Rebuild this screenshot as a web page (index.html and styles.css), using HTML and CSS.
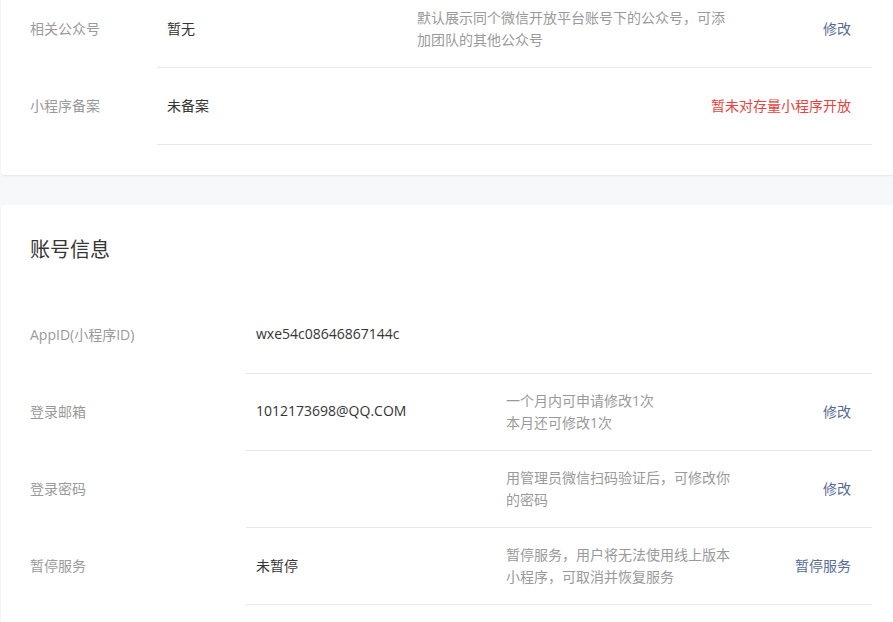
FILE: index.html
```html
<!DOCTYPE html>
<html lang="zh-CN">
<head>
<meta charset="utf-8">
<link rel="stylesheet" href="styles.css">
</head>
<body>
<div class="page">
  <section class="card card-top">
    <div class="row">
      <div class="label narrow">相关公众号</div>
      <div class="content">
        <div class="value">暂无</div>
        <div class="desc">默认展示同个微信开放平台账号下的公众号，可添加团队的其他公众号</div>
        <div class="action"><a class="link">修改</a></div>
      </div>
    </div>
    <div class="row">
      <div class="label narrow">小程序备案</div>
      <div class="content">
        <div class="value">未备案</div>
        <div class="desc"></div>
        <div class="action wide"><span class="warn">暂未对存量小程序开放</span></div>
      </div>
    </div>
  </section>

  <section class="card card-account">
    <h2 class="title">账号信息</h2>
    <div class="row">
      <div class="label">AppID(小程序ID)</div>
      <div class="content">
        <div class="value">wxe54c08646867144c</div>
        <div class="desc"></div>
        <div class="action"></div>
      </div>
    </div>
    <div class="row">
      <div class="label">登录邮箱</div>
      <div class="content">
        <div class="value">1012173698@QQ.COM</div>
        <div class="desc">一个月内可申请修改1次<br>本月还可修改1次</div>
        <div class="action"><a class="link">修改</a></div>
      </div>
    </div>
    <div class="row">
      <div class="label">登录密码</div>
      <div class="content">
        <div class="value"></div>
        <div class="desc">用管理员微信扫码验证后，可修改你的密码</div>
        <div class="action"><a class="link">修改</a></div>
      </div>
    </div>
    <div class="row">
      <div class="label">暂停服务</div>
      <div class="content">
        <div class="value">未暂停</div>
        <div class="desc">暂停服务，用户将无法使用线上版本小程序，可取消并恢复服务</div>
        <div class="action"><a class="link">暂停服务</a></div>
      </div>
    </div>
  </section>
</div>
</body>
</html>
```

FILE: styles.css
```css
html, body {
  margin: 0;
  padding: 0;
  background: #f6f8f9;
  overflow: hidden;
}
body {
  font-family: "Open Sans", "Noto Sans CJK SC", sans-serif;
  font-size: 14px;
  color: #353535;
}
.page {
  margin-top: -9px;
  padding-left: 1px;
  width: 920px;
}
.card {
  background: #fff;
  border-radius: 4px;
  box-shadow: 0 1px 2px rgba(0, 0, 0, 0.07);
}
.card-top {
  padding: 0 0 30px 29px;
}
.card-account {
  margin-top: 30px;
  padding: 30px 0 40px 29px;
}
.title {
  margin: 0 0 34px;
  font-family: "Noto Sans CJK SC", sans-serif;
  font-size: 20px;
  font-weight: normal;
  line-height: 28px;
  color: #353535;
}
.row {
  display: flex;
}
.label {
  width: 216px;
  flex: none;
  color: #9a9a9a;
  display: flex;
  align-items: center;
  height: 77px;
  padding-bottom: 3px;
  box-sizing: border-box;
}
.label.narrow {
  width: 127px;
}
.content {
  display: flex;
  align-items: center;
  width: 626px;
  height: 77px;
  box-sizing: border-box;
  border-bottom: 1px solid #e7e7eb;
}
.card-top .content {
  width: 715px;
}
.value {
  width: 260px;
  flex: none;
  padding-left: 10px;
  margin-bottom: 3px;
  box-sizing: border-box;
}
.desc {
  flex: 1;
  color: #9a9a9a;
  line-height: 22px;
  padding-right: 6px;
  margin-bottom: 1px;
}
.action {
  width: 130px;
  flex: none;
  text-align: right;
  padding-right: 21px;
  margin-bottom: 3px;
  box-sizing: border-box;
  white-space: nowrap;
}
.action.wide {
  width: 200px;
}
.link {
  color: #576b95;
  text-decoration: none;
  cursor: pointer;
}
.warn {
  color: #e64340;
}
```
